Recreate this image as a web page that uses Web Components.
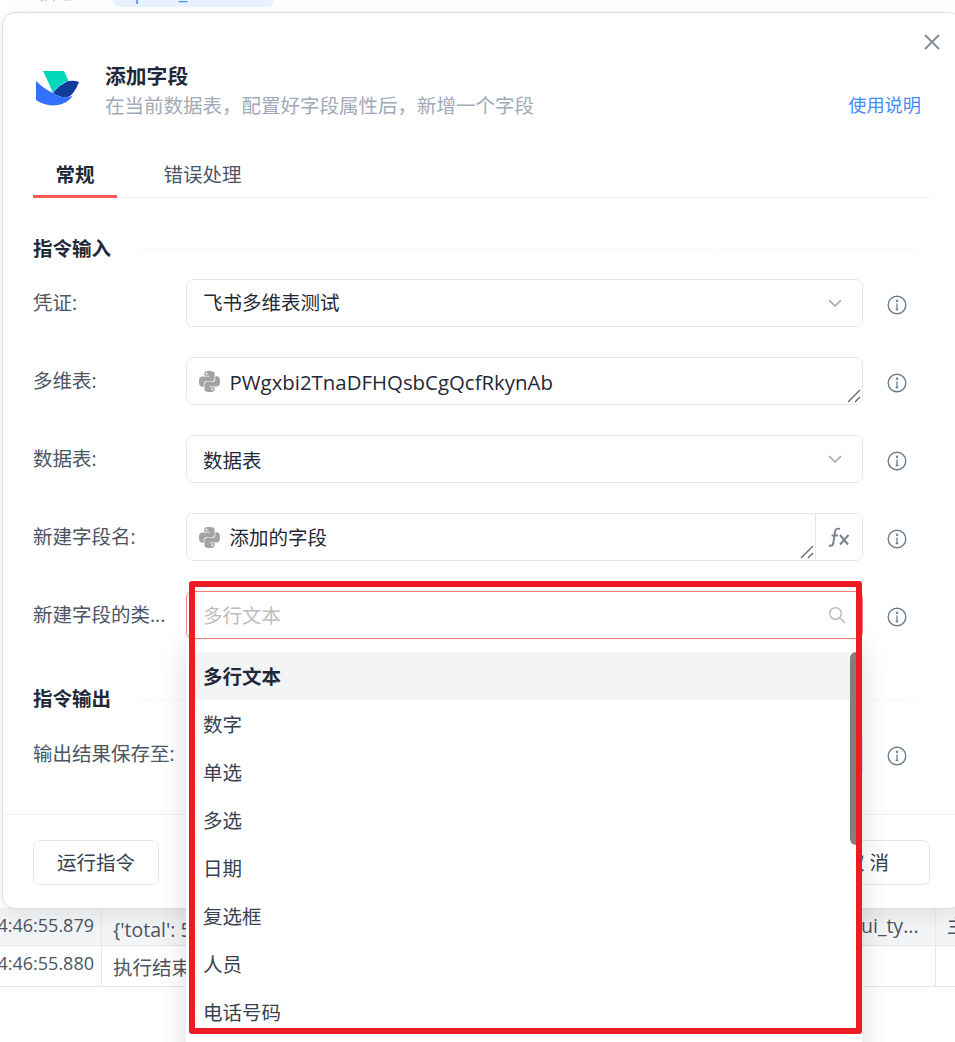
<!DOCTYPE html>
<html lang="zh">
<head>
<meta charset="utf-8">
<title>添加字段</title>
<style>
  html, body { margin: 0; height: 100%; overflow: hidden; background: #fff; }
  body {
    position: relative;
    font: 19.5px/28px "Open Sans", "Noto Sans CJK SC", sans-serif;
    color: #1f2937;
  }
</style>
</head>
<body>
  <log-backdrop></log-backdrop>

  <field-dialog>
    <form-section title="指令输入">
      <form-row label="凭证:"><select-field>飞书多维表测试</select-field></form-row>
      <form-row label="多维表:"><text-field python latin>PWgxbi2TnaDFHQsbCgQcfRkynAb</text-field></form-row>
      <form-row label="数据表:"><select-field class="bajo">数据表</select-field></form-row>
      <form-row label="新建字段名:"><text-field python fx>添加的字段</text-field></form-row>
      <form-row label="新建字段的类..."><search-select placeholder="多行文本"></search-select></form-row>
    </form-section>
    <form-section title="指令输出" class="salida">
      <form-row label="输出结果保存至:"><text-field></text-field></form-row>
    </form-section>
  </field-dialog>

  <mark-box></mark-box>

<script>
// Icons used by more than one element
const PYTHON_ICON = `<svg class="py" width="21" height="21" viewBox="0 0 24 24" fill="#a3a3a3"><path d="M14.25.18l.9.2.73.26.59.3.45.32.34.34.25.34.16.33.1.3.04.26.02.2-.01.13V8.5l-.05.63-.13.55-.21.46-.26.38-.3.31-.33.25-.35.19-.35.14-.33.1-.3.07-.26.04-.21.02H8.77l-.69.05-.59.14-.5.22-.41.27-.33.32-.27.35-.2.36-.15.37-.1.35-.07.32-.04.27-.02.21v3.06H3.17l-.21-.03-.28-.07-.32-.12-.35-.18-.36-.26-.36-.36-.35-.46-.32-.59-.28-.73-.21-.88-.14-1.05-.05-1.23.06-1.22.16-1.04.24-.87.32-.71.36-.57.4-.44.42-.33.42-.24.4-.16.36-.1.32-.05.24-.01h.16l.06.01h8.16v-.83H6.18l-.01-2.75-.02-.37.05-.34.11-.31.17-.28.25-.26.31-.23.38-.2.44-.18.51-.15.58-.12.64-.1.71-.06.77-.04.84-.02 1.27.05zm-6.3 1.98l-.23.33-.08.41.08.41.23.34.33.22.41.09.41-.09.33-.22.23-.34.08-.41-.08-.41-.23-.33-.33-.22-.41-.09-.41.09zm13.09 3.95l.28.06.32.12.35.18.36.27.36.35.35.47.32.59.28.73.21.88.14 1.04.05 1.23-.06 1.23-.16 1.04-.24.86-.32.71-.36.57-.4.45-.42.33-.42.24-.4.16-.36.09-.32.05-.24.02-.16-.01h-8.22v.82h5.84l.01 2.76.02.36-.05.34-.11.31-.17.29-.25.25-.31.24-.38.2-.44.17-.51.15-.58.13-.64.09-.71.07-.77.04-.84.01-1.27-.04-1.07-.14-.9-.2-.73-.25-.59-.3-.45-.33-.34-.34-.25-.34-.16-.33-.1-.3-.04-.25-.02-.2.01-.13v-5.34l.05-.64.13-.54.21-.46.26-.38.3-.32.33-.24.35-.2.35-.14.33-.1.3-.06.26-.04.21-.02.13-.01h5.84l.69-.05.59-.14.5-.21.41-.28.33-.32.27-.35.2-.36.15-.36.1-.35.07-.32.04-.28.02-.21V6.07h2.09l.14.01zm-6.47 14.25l-.23.33-.08.41.08.41.23.33.33.23.41.08.41-.08.33-.23.23-.33.08-.41-.08-.41-.23-.33-.33-.23-.41-.08-.41.08z"/></svg>`;

const GRIP_ICON = `<svg class="grip" width="14" height="14" viewBox="0 0 14 14" fill="none" stroke="#666" stroke-width="1.4"><path d="M1 13L13 1M8 13l5-5"/></svg>`;

const FIELD_CSS = `
  .box {
    box-sizing: border-box;
    position: relative;
    display: flex;
    align-items: center;
    height: 48px;
    border: 1px solid #e5e7eb;
    border-radius: 7px;
    background: #fff;
  }
`;

// Everything behind the dialog: breadcrumb remains and the log table
class LogBackdrop extends HTMLElement {
  constructor() {
    super();
    this.attachShadow({ mode: "open" });
    this.shadowRoot.innerHTML = `
      <style>
        :host { position: absolute; inset: 0; display: flex; flex-direction: column; color: #4b5563; font-size: 19.5px; }
        .crumbs { height: 7px; overflow: hidden; display: flex; align-items: flex-end; gap: 10px; }
        .crumbs span { white-space: nowrap; color: #a9afb8; padding-bottom: 3px; line-height: 24px; }
        .crumbs .path { width: 85px; margin-left: 18px; }
        .crumbs b { font-weight: 400; color: #6f9fd8; }
        .crumbs .chip {
          width: 161px; box-sizing: border-box; padding: 0 9px 3px;
          background: #e8f3ff; border-radius: 6px; color: #4096ff;
        }
        .table {
          margin-top: 901px;
          display: grid;
          grid-template-columns: 102px 748px 86px 1fr;
          grid-template-rows: 38px 41px;
          background: #fff;
        }
        .table div {
          box-sizing: border-box;
          border-right: 1px solid #e5e7eb;
          border-bottom: 1px solid #e5e7eb;
          white-space: nowrap;
          overflow: hidden;
          padding-left: 11px;
          line-height: 36px;
        }
        .table .h { background: #f3f4f6; }
        .table .t { display: flex; justify-content: flex-end; padding: 0 7px 0 0; line-height: 34px; font-size: 18px; }
        .table .v { padding-top: 4px; }
        .table .last { border-right: 0; }
      </style>
      <div class="crumbs"><span class="path">（<b>信息</b>）&gt;</span><span class="chip">#pdas_resultdata</span></div>
      <div class="table">
        <div class="h t">4:46:55.879</div><div class="h v">{'total': 5}</div><div class="h">ui_ty...</div><div class="h last">主</div>
        <div class="t">4:46:55.880</div><div class="v">执行结束</div><div></div><div class="last"></div>
      </div>
    `;
  }
}

// The dialog: header, tabs, slotted form, footer
class FieldDialog extends HTMLElement {
  constructor() {
    super();
    this.attachShadow({ mode: "open" });
    this.shadowRoot.innerHTML = `
      <style>
        :host {
          position: absolute; left: 2px; top: 12px; width: 960px; height: 897px;
          box-sizing: border-box; display: flex; flex-direction: column;
          background: #fff; border: 1px solid #dedede; border-radius: 13px;
          box-shadow: 0 6px 22px rgba(0, 0, 0, .08);
        }
        .main { flex: 1; padding: 49px 31px 0 30px; }
        .close { position: absolute; left: 920px; top: 20px; }
        .head { display: flex; height: 58px; }
        .logo { margin: 9px 26px 0 3px; }
        .info { flex: 1; }
        h1 { margin: 0; font-size: 20.8px; font-weight: 700; line-height: 28px; color: #1f2937; }
        .sub { margin-top: 2px; color: #a2a9b8; }
        .help { align-self: flex-end; margin: 0 9px 1px 0; font-size: 18.2px; color: #3f8cff; }
        .tabs { display: flex; height: 46px; margin-top: 32px; border-bottom: 1px solid #f0f0f0; box-sizing: border-box; }
        .tab { box-sizing: border-box; height: 46px; padding: 9px 22.5px 0; color: #4b5563; }
        .tab.on { font-weight: 700; color: #1f2937; border-bottom: 3px solid #f95b5b; }
        .tab + .tab { margin-left: 24px; }
        .foot {
          display: flex; justify-content: space-between;
          border-top: 1px solid #eeeff1; padding: 25px 31px 23px 30px;
        }
        .btn {
          box-sizing: border-box; width: 126px; height: 45px; border: 1px solid #e5e7eb; border-radius: 7px;
          display: flex; align-items: center; justify-content: center; white-space: pre; color: #374151; background: #fff;
        }
      </style>
      <svg class="close" width="18" height="18" viewBox="0 0 18 18" stroke="#868e99" stroke-width="2" fill="none"><path d="M2 2l14 14M16 2L2 16"/></svg>
      <div class="main">
        <div class="head">
          <svg class="logo" width="43" height="35" viewBox="36 72 43 35">
            <path fill="#00d6b9" d="M43 72H64Q66 76 68.5 82Q60 84 53 94Q48 82 43 72Z"/>
            <path fill="#133c9a" d="M53 94Q60 85 68.5 82Q74 81 79 83Q77 89 73 94Q70 98 67 98Q60 99 53 94Z"/>
            <path fill="#3370ff" d="M36 82Q44 90 53 94Q60 99 67 98Q70 98 73 96.500Q68 104 58 106Q46 108 36 101Z"/>
          </svg>
          <div class="info">
            <h1>添加字段</h1>
            <div class="sub">在当前数据表，配置好字段属性后，新增一个字段</div>
          </div>
          <div class="help">使用说明</div>
        </div>
        <div class="tabs"><div class="tab on">常规</div><div class="tab">错误处理</div></div>
        <slot></slot>
      </div>
      <div class="foot">
        <div class="btn">运行指令</div>
        <div class="btn">取 消</div>
      </div>
    `;
  }
}

// A titled group of rows with a dashed rule beside the title
class FormSection extends HTMLElement {
  constructor() {
    super();
    this.attachShadow({ mode: "open" });
    this.shadowRoot.innerHTML = `
      <style>
        :host { display: block; margin-top: 37px; }
        :host(.salida) { margin-top: 46px; }
        .title { display: flex; align-items: center; font-weight: 700; color: #1f2937; margin-bottom: 16px; }
        :host(.salida) .title { margin-bottom: 17px; }
        .title i { flex: 1; margin: 0 15px 0 29px; border-top: 1px dashed #f1f2f4; }
        .rows { display: flex; flex-direction: column; gap: 30px; }
      </style>
      <div class="title"><span></span><i></i></div>
      <div class="rows"><slot></slot></div>
    `;
  }
  connectedCallback() {
    this.shadowRoot.querySelector("span").textContent = this.getAttribute("title");
    this.removeAttribute("title");
  }
}

// Label + control + info icon
class FormRow extends HTMLElement {
  constructor() {
    super();
    this.attachShadow({ mode: "open" });
    this.shadowRoot.innerHTML = `
      <style>
        :host { display: flex; align-items: center; height: 48px; }
        .label { width: 153px; flex: none; color: #4b5563; white-space: nowrap; margin-top: -1px; }
        .control { flex: 1; min-width: 0; }
        .tip { width: 67px; flex: none; display: flex; justify-content: center; padding-top: 4px; }
      </style>
      <div class="label"></div>
      <div class="control"><slot></slot></div>
      <div class="tip">
        <svg width="20" height="20" viewBox="0 0 20 20" fill="none" stroke="#6b7d8c" stroke-width="1.4">
          <circle cx="10" cy="10" r="8.800"/><path d="M10 8.500v6M8.700 14.500h2.600" stroke-width="1.300"/><circle cx="10" cy="5.800" r=".5" fill="#6b7d8c"/>
        </svg>
      </div>
    `;
  }
  connectedCallback() {
    this.shadowRoot.querySelector(".label").textContent = this.getAttribute("label");
  }
}

class SelectField extends HTMLElement {
  constructor() {
    super();
    this.attachShadow({ mode: "open" });
    this.shadowRoot.innerHTML = `
      <style>
        :host { display: block; }
        :host(.bajo) span { padding-top: 3px; }
        ${FIELD_CSS}
        .box { padding: 0 20px 0 16px; justify-content: space-between; }
      </style>
      <div class="box">
        <span><slot></slot></span>
        <svg width="14" height="8" viewBox="0 0 14 8" fill="none" stroke="#9ca3af" stroke-width="1.500"><path d="M1 1l6 6 6-6"/></svg>
      </div>
    `;
  }
}

class TextField extends HTMLElement {
  constructor() {
    super();
    this.attachShadow({ mode: "open" });
    this.shadowRoot.innerHTML = `
      <style>
        :host { display: block; }
        :host([latin]) .text { font-size: 20.4px; }
        ${FIELD_CSS}
        .box { padding-left: 12px; gap: 9.500px; }
        .text { flex: 1; white-space: nowrap; padding-top: 1px; }
        .py { flex: none; }
        .grip { position: absolute; right: 1px; bottom: 1px; }
        .fx { flex: none; align-self: stretch; width: 46px; border-left: 1px solid #e5e7eb; display: flex; align-items: center; justify-content: center; }
        :host([fx]) .grip { right: 48px; }
      </style>
      <div class="box">
        ${this.hasAttribute("python") ? PYTHON_ICON : ""}
        <span class="text"><slot></slot></span>
        ${GRIP_ICON}
        ${this.hasAttribute("fx") ? `<div class="fx"><svg width="22" height="20" viewBox="0 0 22 20" fill="none" stroke="#7b838f" stroke-width="2"><path d="M1 18.500c3 1 4-.5 4.500-3.500L7 5c.4-3 2-4 5-3M3.500 8.500H10M12 8l8 9.500M20.500 8L12 17.500"/></svg></div>` : ""}
      </div>
    `;
  }
}

// Open select with its search box and the list hanging below it
class SearchSelect extends HTMLElement {
  constructor() {
    super();
    this.attachShadow({ mode: "open" });
    this.shadowRoot.innerHTML = `
      <style>
        :host { display: block; position: relative; z-index: 5; }
        ${FIELD_CSS}
        .box { z-index: 1; border-color: #f57d7d; padding: 0 16px 0 16px; justify-content: space-between; }
        .ph { color: #bdbdbd; padding-top: 2px; }
        .menu {
          position: absolute; left: 0; right: 1px; top: 49px; display: flex; height: 420px;
          padding-top: 12px; background: #fff; border-radius: 7px;
          box-shadow: 0 4px 28px rgba(0, 0, 0, .14);
        }
        .list { flex: 1; padding-left: 8px; }
        .item { height: 48px; line-height: 50px; padding-left: 9px; color: #374151; }
        .item.on { background: #f3f4f6; font-weight: 700; color: #1f2937; }
        .thumb { width: 12px; height: 193px; background: #7f7f7f; border-radius: 6px 0 0 6px; }
      </style>
      <div class="box">
        <span class="ph"></span>
        <svg width="18" height="18" viewBox="0 0 18 18" fill="none" stroke="#bdbdbd" stroke-width="1.500"><circle cx="7.500" cy="7.500" r="5.800"/><path d="M11.800 11.800L17 17"/></svg>
      </div>
      <div class="menu">
        <div class="list">
          <div class="item on">多行文本</div>
          <div class="item">数字</div>
          <div class="item">单选</div>
          <div class="item">多选</div>
          <div class="item">日期</div>
          <div class="item">复选框</div>
          <div class="item">人员</div>
          <div class="item">电话号码</div>
        </div>
        <div class="thumb"></div>
      </div>
    `;
  }
  connectedCallback() {
    this.shadowRoot.querySelector(".ph").textContent = this.getAttribute("placeholder");
  }
}

// Red annotation frame drawn on top of the screenshot
class MarkBox extends HTMLElement {
  constructor() {
    super();
    this.attachShadow({ mode: "open" });
    this.shadowRoot.innerHTML = `
      <style>
        :host {
          position: absolute; left: 189px; top: 581px; width: 673px; height: 453px; z-index: 10;
          box-sizing: border-box; border: 6px solid #ed1c24; border-radius: 3px;
        }
      </style>
    `;
  }
}

customElements.define("log-backdrop", LogBackdrop);
customElements.define("field-dialog", FieldDialog);
customElements.define("form-section", FormSection);
customElements.define("form-row", FormRow);
customElements.define("select-field", SelectField);
customElements.define("text-field", TextField);
customElements.define("search-select", SearchSelect);
customElements.define("mark-box", MarkBox);
</script>
</body>
</html>
